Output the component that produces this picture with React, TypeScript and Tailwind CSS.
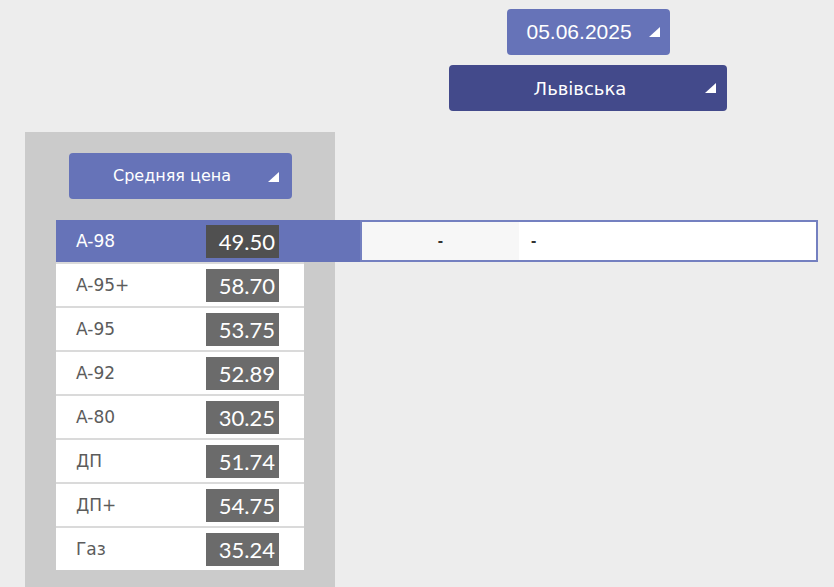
const fuels = [
  { name: 'A-98', price: '49.50' },
  { name: 'A-95+', price: '58.70' },
  { name: 'A-95', price: '53.75' },
  { name: 'A-92', price: '52.89' },
  { name: 'A-80', price: '30.25' },
  { name: 'ДП', price: '51.74' },
  { name: 'ДП+', price: '54.75' },
  { name: 'Газ', price: '35.24' },
]

function Caret() {
  return (
    <svg width="11" height="10" viewBox="0 0 11 10" className="shrink-0">
      <path d="M11 0 L11 10 L0 10 Z" fill="white" />
    </svg>
  )
}

export default function App() {
  const selected = 0

  return (
    <div className="relative h-[587px] w-full overflow-hidden bg-[#ededed] font-['DejaVu_Sans',sans-serif]">
      <div className="ml-[449px] flex w-[278px] flex-col items-center gap-[10px] pt-[9px]">
        <button className="flex h-[46px] w-[163px] items-center justify-between rounded-[4px] bg-[#6673b8] pl-[20px] pr-[10px] font-['Liberation_Sans',sans-serif] text-[21px] text-white">
          <span>05.06.2025</span>
          <Caret />
        </button>
        <button className="relative flex h-[46px] w-full items-center justify-center rounded-[4px] bg-[#434a8b] text-[18px] text-white">
          <span className="-ml-[16px]">Львівська</span>
          <span className="absolute right-[11px] top-[18px]">
            <Caret />
          </span>
        </button>
      </div>

      <div className="ml-[25px] mt-[21px] h-[500px] w-[310px] bg-[#cbcbcb] pt-[21px]">
        <button className="relative ml-[44px] flex h-[46px] w-[223px] items-center rounded-[4px] bg-[#6673b8] pl-[44px] text-[16px] text-white">
          <span>Средняя цена</span>
          <span className="absolute right-[13px] top-[19px]">
            <Caret />
          </span>
        </button>

        <div className="ml-[31px] mt-[21px] flex w-[248px] flex-col gap-[2px] bg-[#dadada]">
          {fuels.map((f, i) =>
            i === selected ? (
              <div key={f.name} className="flex h-[42px] w-[762px]">
                <div className="flex h-full w-[304px] items-center bg-[#6673b8] pl-[20px]">
                  <span className="w-[130px] pt-[2px] text-[17px] text-white">{f.name}</span>
                  <span className="flex h-[33px] w-[73px] items-center justify-end bg-[#505050] pr-[4px] font-['Lato',sans-serif] text-[22px] text-white">
                    {f.price}
                  </span>
                </div>
                <div className="flex h-full flex-1 border-2 border-[#7480c0] bg-white font-['Liberation_Sans',sans-serif] text-[16px] font-bold text-[#333]">
                  <div className="flex w-[157px] items-center justify-center bg-[#f7f7f7]">-</div>
                  <div className="flex items-center pl-[12px]">-</div>
                </div>
              </div>
            ) : (
              <div key={f.name} className="flex h-[42px] w-[248px] items-center bg-white pl-[20px]">
                <span className="w-[130px] pt-[2px] text-[17px] text-[#5c5c5c]">{f.name}</span>
                <span className="flex h-[33px] w-[73px] items-center justify-end bg-[#6b6b6b] pr-[4px] font-['Lato',sans-serif] text-[22px] text-white">
                  {f.price}
                </span>
              </div>
            )
          )}
        </div>
      </div>
    </div>
  )
}
